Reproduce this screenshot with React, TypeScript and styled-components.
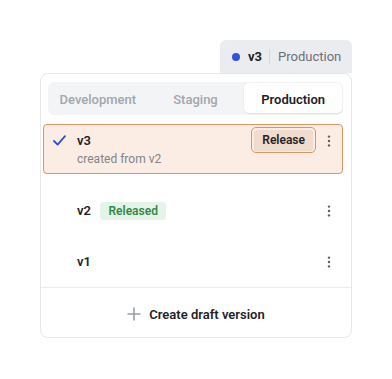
import React from 'react';
import styled, { createGlobalStyle } from 'styled-components';

const GlobalStyle = createGlobalStyle`
  body {
    margin: 0;
    background: #ffffff;
    font-family: Roboto, "Noto Sans", sans-serif;
    color: #1f2328;
  }
`;

const Page = styled.div`
  width: 312px;
  padding: 40px 0 0 40px;
  display: flex;
  flex-direction: column;
`;

const Trigger = styled.button`
  align-self: flex-end;
  position: relative;
  z-index: 1;
  height: 33px;
  width: 132px;
  display: flex;
  align-items: center;
  padding: 0 0 0 12px;
  background: #ebecef;
  border: none;
  border-radius: 6px 6px 0 0;
  font-family: inherit;
  font-size: 13px;
  cursor: pointer;
`;

const Dot = styled.span`
  width: 8px;
  height: 8px;
  border-radius: 50%;
  background: #2f55e0;
  margin-right: 8px;
`;

const TriggerVersion = styled.span`
  font-weight: 700;
  color: #1f2328;
  padding-right: 7px;
  border-right: 1px solid #d6d8dd;
`;

const TriggerEnv = styled.span`
  color: #6b7079;
  padding-left: 8px;
`;

const Panel = styled.div`
  border: 1px solid #e6e7eb;
  border-radius: 8px;
  background: #fff;
  display: flex;
  flex-direction: column;
  overflow: hidden;
`;

const Tabs = styled.div`
  margin: 8px 8px 9px 7px;
  padding: 1px 1px 2px 1px;
  background: #f3f4f6;
  border-radius: 6px;
  display: grid;
  grid-template-columns: repeat(3, 1fr);
`;

const Tab = styled.div<{ $active?: boolean }>`
  height: 30px;
  padding-top: 3px;
  box-sizing: border-box;
  display: flex;
  align-items: center;
  justify-content: center;
  font-size: 13px;
  font-weight: ${(p) => (p.$active ? 600 : 500)};
  color: ${(p) => (p.$active ? '#1f2328' : '#a2a6ad')};
  background: ${(p) => (p.$active ? '#ffffff' : 'transparent')};
  border-radius: 5px;
  box-shadow: ${(p) => (p.$active ? '0 1px 2px rgba(0,0,0,0.08)' : 'none')};
`;

const List = styled.div`
  display: flex;
  flex-direction: column;
  padding: 0 8px 0 2px;
`;

const Row = styled.div<{ $selected?: boolean }>`
  height: ${(p) => (p.$selected ? '50px' : '51px')};
  margin-bottom: ${(p) => (p.$selected ? '11px' : '0')};
  box-sizing: border-box;
  display: grid;
  grid-template-columns: 33px 1fr auto 20px;
  align-items: center;
  padding: 0 3px 0 0;
  border: 1.5px solid ${(p) => (p.$selected ? '#e0955f' : 'transparent')};
  background: ${(p) => (p.$selected ? '#fbede4' : 'transparent')};
  border-radius: 4px;
`;

const CheckCell = styled.div`
  display: flex;
  justify-content: flex-start;
  padding-left: 9px;
  align-self: start;
  padding-top: 10px;
`;

const Info = styled.div<{ $top?: boolean }>`
  display: flex;
  flex-direction: column;
  align-self: ${(p) => (p.$top ? 'start' : 'center')};
  padding-top: ${(p) => (p.$top ? '8px' : '0')};
`;

const NameLine = styled.div`
  display: flex;
  align-items: center;
  gap: 9px;
`;

const Name = styled.span`
  font-size: 13px;
  font-weight: 600;
  color: #1f2328;
`;

const Sub = styled.span`
  font-size: 12px;
  color: #80848b;
  margin-top: 4px;
`;

const Badge = styled.span`
  font-size: 12px;
  font-weight: 600;
  color: #2f8a48;
  background: #e5f4e9;
  border-radius: 4px;
  padding: 1px 8.5px;
  line-height: 16px;
`;

const ReleaseRing = styled.div`
  align-self: start;
  margin: 1.5px 3px 0 0;
  padding: 2px;
  border: 1.5px solid #e0955f;
  border-radius: 5px;
`;

const ReleaseButton = styled.button`
  display: block;
  height: 20px;
  padding: 0 8px;
  border: none;
  border-radius: 3px;
  background: #f0dbcd;
  font-family: inherit;
  font-size: 12px;
  font-weight: 600;
  color: #1f2328;
  box-shadow: 0 1px 1px rgba(0, 0, 0, 0.08);
`;

const Kebab = styled.div<{ $top?: boolean }>`
  display: flex;
  justify-content: center;
  align-self: ${(p) => (p.$top ? 'start' : 'center')};
  padding-top: ${(p) => (p.$top ? '10px' : '0')};
  color: #5a5f66;
`;

const Footer = styled.div`
  border-top: 1px solid #ebecf0;
  height: 50px;
  box-sizing: border-box;
  display: flex;
  align-items: center;
  justify-content: center;
  gap: 8px;
  font-size: 13px;
  font-weight: 600;
  color: #1f2328;
  padding-top: 3px;
`;

const Check = () => (
  <svg width="13" height="11" viewBox="0 0 13 11" fill="none">
    <path d="M1 6 L4.6 9.6 L12 1.2" stroke="#2b4fd6" strokeWidth="1.8" strokeLinecap="round" strokeLinejoin="round" />
  </svg>
);

const Dots = () => (
  <svg width="4" height="12" viewBox="0 0 4 12">
    <circle cx="2" cy="1.6" r="1.2" fill="currentColor" />
    <circle cx="2" cy="6" r="1.2" fill="currentColor" />
    <circle cx="2" cy="10.4" r="1.2" fill="currentColor" />
  </svg>
);

const Plus = () => (
  <svg width="14" height="14" viewBox="0 0 14 14">
    <path d="M7 0.5 V13.5 M0.5 7 H13.5" stroke="#9aa0a8" strokeWidth="1.6" />
  </svg>
);

export default function App() {
  return (
    <Page>
      <GlobalStyle />
      <Trigger>
        <Dot />
        <TriggerVersion>v3</TriggerVersion>
        <TriggerEnv>Production</TriggerEnv>
      </Trigger>
      <Panel>
        <Tabs>
          <Tab>Development</Tab>
          <Tab>Staging</Tab>
          <Tab $active>Production</Tab>
        </Tabs>
        <List>
          <Row $selected>
            <CheckCell><Check /></CheckCell>
            <Info $top>
              <Name>v3</Name>
              <Sub>created from v2</Sub>
            </Info>
            <ReleaseRing>
              <ReleaseButton>Release</ReleaseButton>
            </ReleaseRing>
            <Kebab $top><Dots /></Kebab>
          </Row>
          <Row>
            <span />
            <Info>
              <NameLine>
                <Name>v2</Name>
                <Badge>Released</Badge>
              </NameLine>
            </Info>
            <span />
            <Kebab><Dots /></Kebab>
          </Row>
          <Row>
            <span />
            <Info>
              <Name>v1</Name>
            </Info>
            <span />
            <Kebab><Dots /></Kebab>
          </Row>
        </List>
        <Footer>
          <Plus />
          Create draft version
        </Footer>
      </Panel>
    </Page>
  );
}
